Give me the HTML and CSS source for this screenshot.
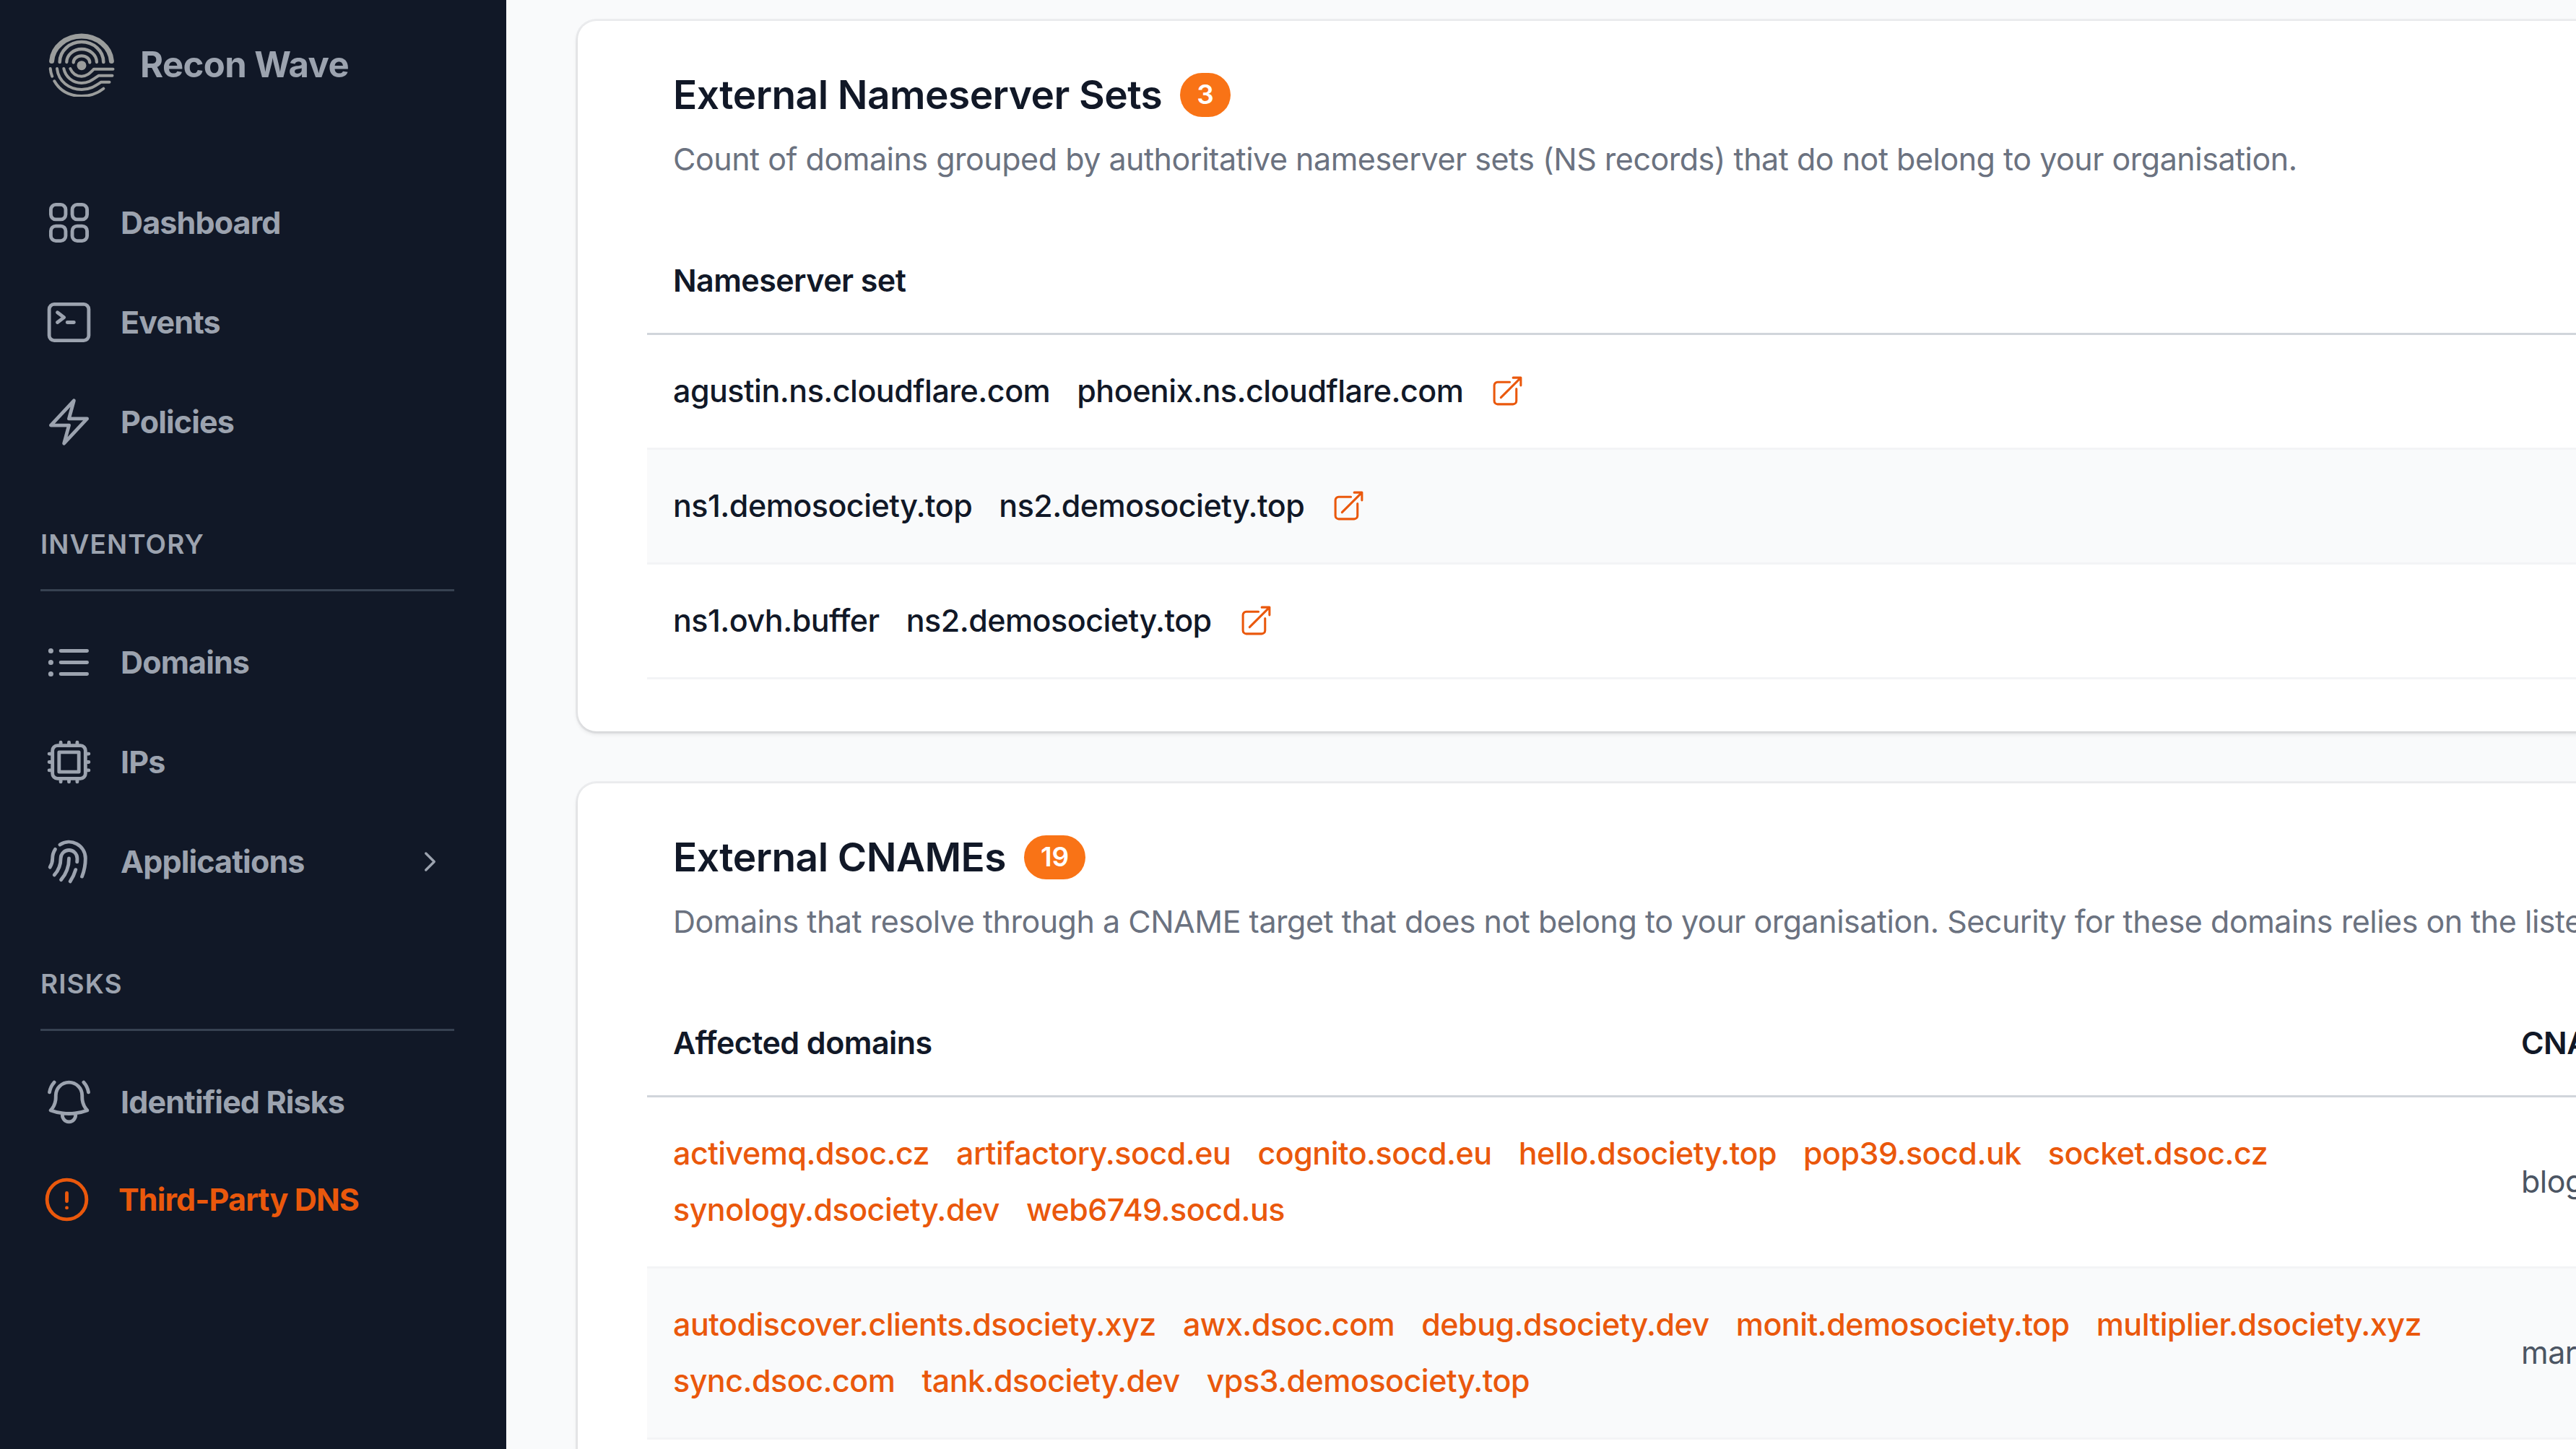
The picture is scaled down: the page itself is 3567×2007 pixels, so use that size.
FILE: index.html
```html
<!DOCTYPE html>
<html lang="en">
<head>
    <meta charset="UTF-8">
    <meta name="viewport" content="width=device-width, initial-scale=1.0">
    <title>Third-Party DNS - Recon Wave</title>
    <link rel="stylesheet" href="styles.css">
</head>
<body>
    <div class="layout">
        <aside class="sidebar">
            <div class="brand">
                <svg class="logo" viewBox="0 0 92 91" fill="none" stroke="currentColor" stroke-linecap="round" stroke-linejoin="round">
                    <circle cx="46" cy="47.700" r="6.500" fill="currentColor" stroke="none"/>
                    <path stroke-width="7" d="M4.600 41.500a41.500 37 0 0 1 82.800 0"/>
                    <path stroke-width="4.600" d="M15.700 43a30.300 28 0 0 1 60.600 0"/>
                    <path stroke-width="4.300" d="M25.300 43a20.800 18 0 0 1 41.600 0M34.700 43.500a11.300 9.200 0 0 1 22.600 0"/>
                    <path stroke-width="4" d="M30.300 52c3 7 9 10.700 15.700 10.700c7.500 0 12-5 17-10h26.500"/>
                    <path stroke-width="4" d="M21.300 52c2.500 12 13 20 24.700 20c10 0 15-4.500 23.700-10.300h18.800"/>
                    <path stroke-width="4" d="M12 52c2 18 17 29 34 29c12 0 19-5 27-10.300h11.500"/>
                    <path stroke-width="4" d="M2.700 52c.3 4 1.200 7.500 2.500 10.700M8.300 69.300c8 14 21 20.700 37.700 20.700c12 0 21-3 30.300-10.300"/>
                </svg>
                <span>Recon Wave</span>
            </div>

            <nav class="menu">
                <a class="item">
                    <svg class="icon" viewBox="0 0 24 24"><rect x="3.750" y="3.750" width="6.750" height="6.750" rx="2.250"/><rect x="13.500" y="3.750" width="6.750" height="6.750" rx="2.250"/><rect x="3.750" y="13.500" width="6.750" height="6.750" rx="2.250"/><rect x="13.500" y="13.500" width="6.750" height="6.750" rx="2.250"/></svg>
                    <span>Dashboard</span>
                </a>
                <a class="item">
                    <svg class="icon" viewBox="0 0 24 24"><path d="m6.750 7.500 3 2.250-3 2.250m4.500 0h3m-9 8.250h13.500A2.250 2.250 0 0 0 21 18V6a2.250 2.250 0 0 0-2.250-2.250H5.250A2.250 2.250 0 0 0 3 6v12a2.250 2.250 0 0 0 2.250 2.250Z"/></svg>
                    <span>Events</span>
                </a>
                <a class="item">
                    <svg class="icon" viewBox="0 0 24 24"><path d="m3.750 13.500 10.500-11.250L12 10.500h8.250L9.750 21.750 12 13.500H3.750Z"/></svg>
                    <span>Policies</span>
                </a>
            </nav>

            <h3 class="section">INVENTORY</h3>
            <nav class="menu">
                <a class="item">
                    <svg class="icon" viewBox="0 0 24 24"><path d="M8.250 6.750h12M8.250 12h12m-12 5.250h12M3.750 6.750h.007v.008H3.750V6.750Zm.375 0a.375.375 0 1 1-.750 0 .375.375 0 0 1 .750 0ZM3.750 12h.007v.008H3.750V12Zm.375 0a.375.375 0 1 1-.750 0 .375.375 0 0 1 .750 0Zm-.375 5.250h.007v.008H3.750v-.008Zm.375 0a.375.375 0 1 1-.750 0 .375.375 0 0 1 .750 0Z"/></svg>
                    <span>Domains</span>
                </a>
                <a class="item">
                    <svg class="icon" viewBox="0 0 24 24"><path d="M8.250 3v1.500M4.500 8.250H3m18 0h-1.500M4.500 12H3m18 0h-1.500m-15 3.750H3m18 0h-1.500M8.250 19.500V21M12 3v1.500m0 15V21m3.750-18v1.500m0 15V21m-9-1.500h10.500a2.250 2.250 0 0 0 2.250-2.250V6.750a2.250 2.250 0 0 0-2.250-2.250H6.750A2.250 2.250 0 0 0 4.500 6.750v10.500a2.250 2.250 0 0 0 2.250 2.250Zm.750-12h9v9h-9v-9Z"/></svg>
                    <span>IPs</span>
                </a>
                <a class="item">
                    <svg class="icon" viewBox="0 0 24 24"><path d="M7.864 4.243A7.500 7.500 0 0 1 19.500 10.500c0 2.920-.556 5.709-1.568 8.268M5.742 6.364A7.465 7.465 0 0 0 4.500 10.500a7.464 7.464 0 0 1-1.150 3.993m1.989 3.559A11.209 11.209 0 0 0 8.250 10.500a3.750 3.750 0 1 1 7.500 0c0 .527-.021 1.049-.064 1.565M12 10.500a14.940 14.940 0 0 1-3.600 9.750m6.633-4.596a18.666 18.666 0 0 1-2.485 5.330"/></svg>
                    <span>Applications</span>
                    <svg class="chevron" viewBox="0 0 24 24"><path d="m8.250 4.500 7.500 7.500-7.500 7.500"/></svg>
                </a>
            </nav>

            <h3 class="section">RISKS</h3>
            <nav class="menu">
                <a class="item">
                    <svg class="icon" viewBox="0 0 24 24"><path d="M14.857 17.082a23.848 23.848 0 0 0 5.454-1.310A8.967 8.967 0 0 1 18 9.750V9A6 6 0 0 0 6 9v.750a8.967 8.967 0 0 1-2.312 6.022c1.733.640 3.560 1.085 5.455 1.310m5.714 0a24.255 24.255 0 0 1-5.714 0m5.714 0a3 3 0 1 1-5.714 0M3.124 7.500A8.969 8.969 0 0 1 5.292 3m13.416 0a8.969 8.969 0 0 1 2.168 4.500"/></svg>
                    <span>Identified Risks</span>
                </a>
                <a class="item active">
                    <svg class="icon" viewBox="0 0 24 24"><path d="M12 9v3.750m9-.750a9 9 0 1 1-18 0 9 9 0 0 1 18 0Zm-9 3.750h.008v.008H12v-.008Z"/></svg>
                    <span>Third-Party DNS</span>
                </a>
            </nav>
        </aside>

        <main class="content">
            <section class="card">
                <h2 class="title">External Nameserver Sets <span class="badge">3</span></h2>
                <p class="subtitle">Count of domains grouped by authoritative nameserver sets (NS records) that do not belong to your organisation.</p>
                <div class="table">
                    <div class="row head"><div>Nameserver set</div></div>
                    <div class="row"><div class="hosts"><span>agustin.ns.cloudflare.com</span><span>phoenix.ns.cloudflare.com</span><svg class="open" viewBox="0 0 24 24"><use href="#open"/></svg></div></div>
                    <div class="row"><div class="hosts"><span>ns1.demosociety.top</span><span>ns2.demosociety.top</span><svg class="open" viewBox="0 0 24 24"><use href="#open"/></svg></div></div>
                    <div class="row"><div class="hosts"><span>ns1.ovh.buffer</span><span>ns2.demosociety.top</span><svg class="open" viewBox="0 0 24 24"><use href="#open"/></svg></div></div>
                </div>
            </section>

            <section class="card">
                <h2 class="title">External CNAMEs <span class="badge">19</span></h2>
                <p class="subtitle">Domains that resolve through a CNAME target that does not belong to your organisation. Security for these domains relies on the listed</p>
                <div class="table">
                    <div class="row head"><div class="affected">Affected domains</div><div>CNAME</div></div>
                    <div class="row">
                        <div class="hosts links affected"><a>activemq.dsoc.cz</a><a>artifactory.socd.eu</a><a>cognito.socd.eu</a><a>hello.dsociety.top</a><a>pop39.socd.uk</a><a>socket.dsoc.cz</a><a>synology.dsociety.dev</a><a>web6749.socd.us</a></div>
                        <div class="target">blog</div>
                    </div>
                    <div class="row">
                        <div class="hosts links affected"><a>autodiscover.clients.dsociety.xyz</a><a>awx.dsoc.com</a><a>debug.dsociety.dev</a><a>monit.demosociety.top</a><a>multiplier.dsociety.xyz</a><a>sync.dsoc.com</a><a>tank.dsociety.dev</a><a>vps3.demosociety.top</a></div>
                        <div class="target">mark</div>
                    </div>
                </div>
            </section>
        </main>
    </div>

    <svg class="defs" width="0" height="0">
        <defs>
            <path id="open" d="M13.500 6H5.250A2.250 2.250 0 0 0 3 8.250v10.500A2.250 2.250 0 0 0 5.250 21h10.500A2.250 2.250 0 0 0 18 18.750V10.500m-10.500 6L21 3m0 0h-5.250M21 3v5.250"/>
        </defs>
    </svg>
</body>
</html>
```
FILE: styles.css
```css
* { box-sizing: border-box; }
body {
    margin: 0;
    font-family: Inter, "Liberation Sans", sans-serif;
    font-size: 43px;
    font-weight: 420;
    letter-spacing: -0.49px;
    background: #f9fafb;
    color: #111827;
    overflow: hidden;
}
.layout { display: flex; height: 2007px; overflow: hidden; }
.sidebar {
    width: 701px;
    flex-shrink: 0;
    background: #111827;
    color: #9ca3af;
    padding: 43px 72px 0 56px;
    font-weight: 660;
    letter-spacing: -0.87px;
}
.brand { display: flex; align-items: center; gap: 35px; padding-left: 11px; font-size: 49px; height: 92px; letter-spacing: -0.6px; }
.logo { width: 92px; height: 91px; margin-top: -2px; color: #9b9d9c; }
.menu { display: flex; flex-direction: column; }
.brand + .menu { margin-top: 104px; }
.item { display: flex; align-items: center; height: 138px; padding-left: 3px; }
.icon {
    width: 73px;
    height: 73px;
    margin-right: 35px;
    fill: none;
    stroke: currentColor;
    stroke-width: 1.6;
    stroke-linecap: round;
    stroke-linejoin: round;
}
.chevron {
    width: 37px;
    height: 37px;
    margin-left: auto;
    margin-right: 15px;
    fill: none;
    stroke: currentColor;
    stroke-width: 2.2;
    stroke-linecap: round;
    stroke-linejoin: round;
}
.section {
    margin: 77px 0 29px;
    padding-bottom: 38px;
    font-size: 37px;
    line-height: 48px;
    font-weight: 640;
    letter-spacing: 1.1px;
    border-bottom: 3px solid #374151;
}
.active { height: 132px; padding-left: 0; color: #ea580c; }
.content { flex: 1; min-width: 0; padding: 29px 0 0 99px; }
.card {
    width: 3000px;
    height: 984px;
    margin-bottom: 72px;
    padding: 67px 96px 0;
    border-radius: 26px;
    background: #fff;
    box-shadow: 0 0 0 3px rgba(17, 24, 39, .05), 0 3px 6px rgba(0, 0, 0, .12);
}
.title { display: flex; align-items: center; margin: 0; padding-left: 36px; height: 70px; font-size: 55px; font-weight: 630; letter-spacing: -0.55px; }
.badge { margin-left: 25px; padding: 0 23px; height: 61px; line-height: 60px; border-radius: 31px; background: #f97316; color: #fff; font-size: 37px; font-weight: 560; letter-spacing: -0.3px; }
.subtitle { margin: 24px 0 0; padding-left: 36px; line-height: 60px; color: #6b7280; white-space: nowrap; }
.table { margin-top: 65px; }
.row { display: flex; align-items: center; padding: 38px 36px 40px; border-bottom: 3px solid #f3f4f6; line-height: 78px; }
.row:nth-child(odd) { background: #f9fafb; }
.row.head { background: #fff; font-weight: 625; border-color: #d1d5db; padding: 34px 36px; letter-spacing: -0.57px; }
.hosts { display: flex; flex-wrap: wrap; align-items: center; column-gap: 37px; font-weight: 530; letter-spacing: -0.52px; }
.links { color: #ea580c; }
.open { width: 49px; height: 49px; fill: none; stroke: #ea580c; stroke-width: 1.5; stroke-linecap: round; stroke-linejoin: round; }
.affected { width: 2559px; flex-shrink: 0; }
.target { color: #4b5563; }
.defs { display: none; }
```
